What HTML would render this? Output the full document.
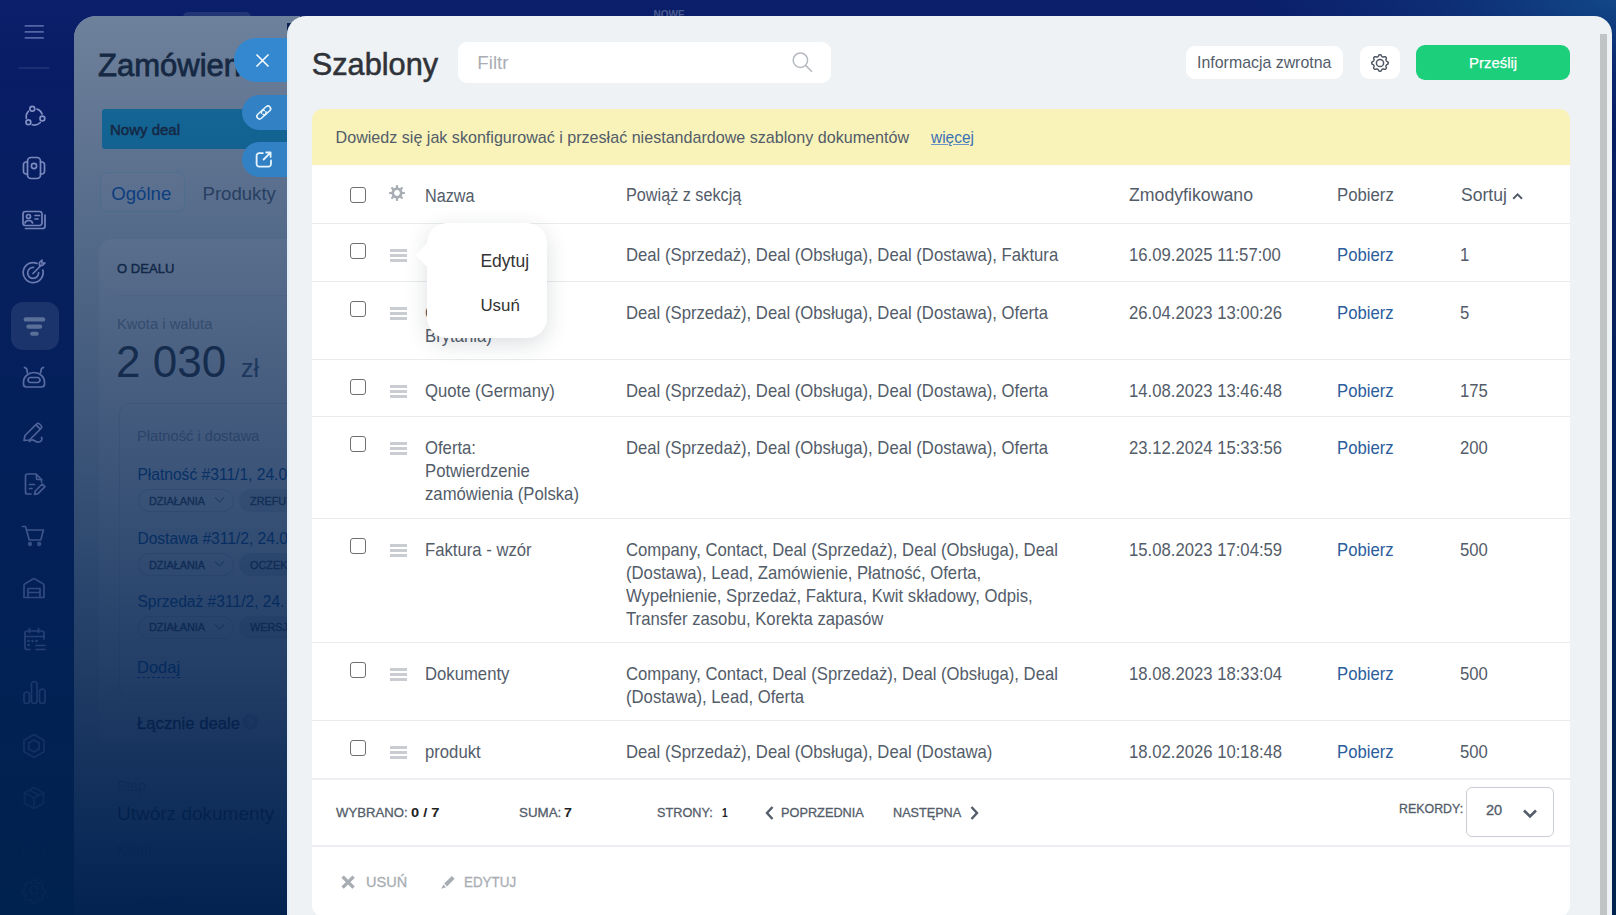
<!DOCTYPE html>
<html><head><meta charset="utf-8">
<style>
*{box-sizing:border-box;margin:0;padding:0}
html,body{width:1616px;height:915px;overflow:hidden}
body{position:relative;font-family:"Liberation Sans",sans-serif;background:linear-gradient(180deg,#0b1f6a 0px,#081c66 80px,#06205e 250px,#03205a 460px,#01224f 860px,#00224f 915px)}
.a{position:absolute;white-space:nowrap}
#slider{position:absolute;left:287px;top:16px;width:1325px;height:899px;background:#eef2f4;border-radius:19px 18px 0 0;overflow:hidden}
.s{position:absolute;white-space:nowrap}
</style></head>
<body>
<div class="a" style="left:1200.00px;top:0.00px;width:416.00px;height:200.00px;background:radial-gradient(ellipse 360px 120px at 416px 0px, rgba(20,85,145,0.75) 0%, rgba(20,85,145,0.25) 50%, rgba(20,85,145,0) 100%)"></div>
<svg class="a" style="left:0;top:0" width="74" height="915" viewBox="0 0 74 915" fill="none" stroke="#8290c4" stroke-width="1.7" stroke-linecap="round" stroke-linejoin="round">
 <defs><linearGradient id="icg" gradientUnits="userSpaceOnUse" x1="0" y1="120" x2="0" y2="900">
   <stop offset="0" stop-color="#8d9bd0" stop-opacity="1"/>
   <stop offset="0.4" stop-color="#8d9bd0" stop-opacity="0.55"/>
   <stop offset="0.73" stop-color="#8d9bd0" stop-opacity="0.18"/>
   <stop offset="1" stop-color="#8d9bd0" stop-opacity="0.04"/>
 </linearGradient></defs>
 <g fill="#5465a6" stroke="none"><rect x="24.5" y="25.1" width="19.5" height="1.7" rx="0.85"/><rect x="24.5" y="31.1" width="19.5" height="1.7" rx="0.85"/><rect x="24.5" y="37.1" width="19.5" height="1.7" rx="0.85"/></g>
 <path d="M19 68h30" stroke="#22357a" stroke-width="1.3"/>
 <g><path d="M36.93 109.0 A8.2 8.2 0 0 1 42.1 114.0"/><path d="M40.3 122.5 A8.2 8.2 0 0 1 32.28 124.72"/><path d="M26.32 118.23 A8.2 8.2 0 0 1 28.4 111.21"/>
 <circle cx="32.3" cy="108.7" r="2.4"/><circle cx="42.4" cy="118.5" r="2.4"/><circle cx="28.4" cy="122.3" r="2.4"/></g>
 <g transform="translate(34,168)" opacity="0.95"><rect x="-6.5" y="-10.5" width="13" height="21" rx="3.5"/><path d="M-6.5 -6 h-1.5 a2.5 2.5 0 0 0 -2.5 2.5 v7 a2.5 2.5 0 0 0 2.5 2.5 h1.5 M6.5 -6 h1.5 a2.5 2.5 0 0 1 2.5 2.5 v7 a2.5 2.5 0 0 1 -2.5 2.5 h-1.5"/><circle cx="0" cy="-2" r="2.6"/></g>
 <g transform="translate(34,220)" opacity="0.9"><rect x="-11" y="-8.5" width="19" height="14" rx="2.5"/><path d="M11 -5 v11 a2.5 2.5 0 0 1 -2.5 2.5 h-17"/><circle cx="-5.5" cy="-3.5" r="2"/><path d="M-9 3 a3.8 3 0 0 1 7.5 0M1 -4.5h4.5M1 -1h3"/></g>
 <g transform="translate(34,273)" opacity="0.82"><path d="M8.8 -3 A10 10 0 1 1 3 -9.6"/><path d="M4.6 -0.5 A5.5 5.5 0 1 1 -0.5 -5.6"/><path d="M-1 0.5 L7.5 -8 M5.5 -10.5 v3 h3 l2.5 -2.5 h-3 v-3z"/></g>
 <g transform="translate(34,378)" opacity="0.68"><path d="M-10.5 4 a10.5 9.5 0 0 1 21 0 v2 a3 3 0 0 1 -3 3 h-15 a3 3 0 0 1 -3 -3z"/><rect x="-6" y="-0.5" width="12" height="5" rx="2.5"/><path d="M-6.5 -5 l-1 -4.5 l-2 -1 M6.5 -5 l1 -4.5 l2 -1"/></g>
 <g transform="translate(34,431)" opacity="0.6"><path d="M-10 9.5 l1 -5 l11.5 -11.5 a2.2 2.2 0 0 1 3 0 l1.5 1.5 a2.2 2.2 0 0 1 0 3 l-11.5 11.5 z M1.8 -6.3 l4.5 4.5"/><path d="M-4.5 10.5 c1.5 -1.5 3 -2 4.5 -1 c1.5 1 3 2 5 1.5 c2.5 -0.5 3.5 -2.5 2.5 -4.5"/></g>
 <g transform="translate(34,484)" opacity="0.52"><path d="M-3 10 h-3.5 a2 2 0 0 1 -2 -2 v-16 a2 2 0 0 1 2 -2 h8.5 l5.5 5.5 v2.5"/><path d="M2.5 -9.5 v4 a1 1 0 0 0 1 1 h4"/><path d="M-4.5 0.5h5M-4.5 4.5h2.5"/><path d="M0.5 10.5 l0.8 -3.5 l7 -7 l2.7 2.7 l-7 7z"/></g>
 <g transform="translate(34,536)" opacity="0.45"><path d="M-11.5 -9.5 h3 l3.8 13.5 h11.5 l2.6 -10 h-17"/><circle cx="-4" cy="8" r="1.3"/><circle cx="5.2" cy="8" r="1.3"/></g>
 <g transform="translate(34,588)" opacity="0.36"><path d="M-10 9.5 v-12 a2 2 0 0 1 1 -1.7 l8 -4.8 a2 2 0 0 1 2 0 l8 4.8 a2 2 0 0 1 1 1.7 v12z"/><path d="M-6 9.5 v-9 h12 v9 M-6 4.5 h12"/></g>
 <g transform="translate(34,640)" opacity="0.28"><path d="M10 -1 v-6 a2 2 0 0 0 -2 -2 h-15 a2 2 0 0 0 -2 2 v14.5 a2 2 0 0 0 2 2 h3"/><path d="M-4.5 -11.5 v4 M4.5 -11.5 v4 M-9 -3.5 h19"/><path d="M-5.5 1h0.1M-1.5 1h0.1M2.5 1h0.1M-5.5 5h0.1" stroke-width="2.4"/><path d="M2 5.5 h9 M2 9.5 h9"/></g>
 <g transform="translate(34,692)" opacity="0.2"><rect x="-10" y="0" width="5.5" height="11.5" rx="2.75"/><rect x="-2.5" y="-10.5" width="5.5" height="22" rx="2.75"/><rect x="5.5" y="-3" width="5.5" height="14.5" rx="2.75"/></g>
 <g transform="translate(34,746)" opacity="0.14"><path d="M0 -11.5 l10 5.75 v11.5 l-10 5.75 l-10 -5.75 v-11.5z"/><path d="M0 -6 l5.2 3 v6 l-5.2 3 l-5.2 -3 v-6z"/></g>
 <g transform="translate(34,798)" opacity="0.09"><path d="M0 -10.5 l9.5 5.2 v10.5 l-9.5 5.3 l-9.5 -5.3 v-10.5z M-9.5 -5.3 l9.5 5.3 l9.5 -5.3 M0 0 v10.5 M-4.5 -8 l9.5 5.3"/></g>
 <g transform="translate(34,850)" opacity="0.025"><circle r="11"/></g>
 <g transform="translate(34,890)" opacity="0.04"><circle r="4"/><path d="M-1.8 -10 h3.6 l0.7 2.6 l2 0.8 l2.3 -1.3 l2.5 2.5 l-1.3 2.3 l0.8 2 l2.6 0.7 v3.6 l-2.6 0.7 l-0.8 2 l1.3 2.3 l-2.5 2.5 l-2.3 -1.3 l-2 0.8 l-0.7 2.6 h-3.6 l-0.7 -2.6 l-2 -0.8 l-2.3 1.3 l-2.5 -2.5 l1.3 -2.3 l-0.8 -2 l-2.6 -0.7 v-3.6 l2.6 -0.7 l0.8 -2 l-1.3 -2.3 l2.5 -2.5 l2.3 1.3 l2 -0.8z"/></g>
</svg>
<div class="a" style="left:11.20px;top:301.80px;width:47.60px;height:48.20px;border-radius:12px;background:rgba(160,176,208,0.14)"></div>
<svg class="a" style="left:0;top:0" width="74" height="400"><g fill="#5b7099"><rect x="23.6" y="317.2" width="21.6" height="4.4" rx="2.2"/><rect x="26.3" y="324.6" width="15.9" height="4.2" rx="2.1"/><rect x="30.1" y="331.8" width="8.6" height="4" rx="2"/></g></svg>
<div class="a" style="left:183.00px;top:11.50px;width:68.00px;height:5.50px;border-radius:7px 7px 0 0;background:#223575"></div>
<div class="a t" style="left:653.50px;top:9.73px;font-size:10px;line-height:10px;color:#4b5c8e;font-weight:bold;">NOWE</div>
<div class="a" style="left:74.00px;top:16.00px;width:226.00px;height:899.00px;border-radius:22px 0 0 0;background:#eef2f4"></div>
<div class="a t" style="left:98.00px;top:50.45px;font-size:31px;line-height:31px;color:#333;font-weight:normal;-webkit-text-stroke:0.8px #333">Zamówienie</div>
<div class="a" style="left:102.00px;top:109.00px;width:198.00px;height:40.00px;border-radius:3px 0 0 3px;background:#2fc6f6"></div>
<div class="a t" style="left:110.00px;top:122.40px;font-size:15px;line-height:15px;color:#333;font-weight:normal;-webkit-text-stroke:0.5px #333">Nowy deal</div>
<div class="a" style="left:99.50px;top:172.30px;width:85.00px;height:39.30px;border-radius:8px;border:1px solid rgba(47,198,246,0.18);background:rgba(255,255,255,0.35)"></div>
<div class="a t" style="left:111.30px;top:184.95px;font-size:18.6px;line-height:18.6px;color:#1f6fcf;font-weight:normal;">Ogólne</div>
<div class="a t" style="left:202.50px;top:184.95px;font-size:18.6px;line-height:18.6px;color:#6a737f;font-weight:normal;">Produkty</div>
<div class="a" style="left:98.80px;top:238.50px;width:221.20px;height:505.50px;border-radius:13px;background:#fff"></div>
<div class="a t" style="left:117.00px;top:262.02px;font-size:13.2px;line-height:13.2px;color:#333;font-weight:normal;-webkit-text-stroke:0.45px #333;transform:scaleX(0.99);transform-origin:0 0">O DEALU</div>
<div class="a" style="left:118.00px;top:295.00px;width:182.00px;height:1.00px;background:#edf0f2"></div>
<div class="a t" style="left:117.00px;top:317.47px;font-size:14.8px;line-height:14.8px;color:#a8adb4;font-weight:normal;">Kwota i waluta</div>
<div class="a t" style="left:116.00px;top:339.65px;font-size:44px;line-height:44px;color:#4a4a4a;font-weight:normal;">2 030</div>
<div class="a t" style="left:241.00px;top:355.73px;font-size:25px;line-height:25px;color:#6a737f;font-weight:normal;">zł</div>
<div class="a" style="left:118.70px;top:403.00px;width:201.30px;height:297.00px;border-radius:12px;box-shadow:inset 0 0 0 1px #e8ebee"></div>
<div class="a t" style="left:137.00px;top:428.75px;font-size:14.7px;line-height:14.7px;color:#a8adb4;font-weight:normal;">Płatność i dostawa</div>
<div class="a t" style="left:137.40px;top:466.79px;font-size:15.6px;line-height:15.6px;color:#2067b0;font-weight:normal;">Płatność #311/1, 24.0</div>
<div class="a" style="left:138.40px;top:488.70px;width:95.60px;height:23.30px;border-radius:12px;box-shadow:inset 0 0 0 1px #dfe3e7"></div>
<div class="a t" style="left:148.80px;top:495.62px;font-size:11.2px;line-height:11.2px;color:#535c69;font-weight:normal;-webkit-text-stroke:0.35px #535c69;transform:scaleX(0.97);transform-origin:0 0">DZIAŁANIA</div>
<svg class="a" style="left:214px;top:496.2px" width="11" height="8"><path d="M1 1.5l4.5 4.5l4.5-4.5" fill="none" stroke="#a8adb4" stroke-width="1.1"/></svg>
<div class="a" style="left:239.40px;top:488.70px;width:90.60px;height:23.30px;border-radius:12px;background:#e3e8ec"></div>
<div class="a t" style="left:249.50px;top:495.62px;font-size:11.2px;line-height:11.2px;color:#535c69;font-weight:normal;-webkit-text-stroke:0.35px #535c69;transform:scaleX(0.97);transform-origin:0 0">ZREFUNDOWANO</div>
<div class="a t" style="left:137.40px;top:530.79px;font-size:15.6px;line-height:15.6px;color:#2067b0;font-weight:normal;">Dostawa #311/2, 24.0</div>
<div class="a" style="left:138.40px;top:552.70px;width:95.60px;height:23.30px;border-radius:12px;box-shadow:inset 0 0 0 1px #dfe3e7"></div>
<div class="a t" style="left:148.80px;top:559.62px;font-size:11.2px;line-height:11.2px;color:#535c69;font-weight:normal;-webkit-text-stroke:0.35px #535c69;transform:scaleX(0.97);transform-origin:0 0">DZIAŁANIA</div>
<svg class="a" style="left:214px;top:560.2px" width="11" height="8"><path d="M1 1.5l4.5 4.5l4.5-4.5" fill="none" stroke="#a8adb4" stroke-width="1.1"/></svg>
<div class="a" style="left:239.40px;top:552.70px;width:90.60px;height:23.30px;border-radius:12px;background:#e3e8ec"></div>
<div class="a t" style="left:249.50px;top:559.62px;font-size:11.2px;line-height:11.2px;color:#535c69;font-weight:normal;-webkit-text-stroke:0.35px #535c69;transform:scaleX(0.97);transform-origin:0 0">OCZEKIWANIE</div>
<div class="a t" style="left:137.40px;top:593.59px;font-size:15.6px;line-height:15.6px;color:#2067b0;font-weight:normal;">Sprzedaż #311/2, 24.</div>
<div class="a" style="left:138.40px;top:615.50px;width:95.60px;height:23.30px;border-radius:12px;box-shadow:inset 0 0 0 1px #dfe3e7"></div>
<div class="a t" style="left:148.80px;top:622.42px;font-size:11.2px;line-height:11.2px;color:#535c69;font-weight:normal;-webkit-text-stroke:0.35px #535c69;transform:scaleX(0.97);transform-origin:0 0">DZIAŁANIA</div>
<svg class="a" style="left:214px;top:623.0px" width="11" height="8"><path d="M1 1.5l4.5 4.5l4.5-4.5" fill="none" stroke="#a8adb4" stroke-width="1.1"/></svg>
<div class="a" style="left:239.40px;top:615.50px;width:90.60px;height:23.30px;border-radius:12px;background:#e3e8ec"></div>
<div class="a t" style="left:249.50px;top:622.42px;font-size:11.2px;line-height:11.2px;color:#535c69;font-weight:normal;-webkit-text-stroke:0.35px #535c69;transform:scaleX(0.97);transform-origin:0 0">WERSJA</div>
<div class="a t" style="left:137.00px;top:659.23px;font-size:16.5px;line-height:16.5px;color:#2067b0;font-weight:normal;border-bottom:1px dashed #2067b0;line-height:16.5px;height:18.5px">Dodaj</div>
<div class="a t" style="left:137.00px;top:716.06px;font-size:16.7px;line-height:16.7px;color:#333;font-weight:normal;-webkit-text-stroke:0.3px #333">Łącznie deale</div>
<div class="a" style="left:242.00px;top:714.00px;width:16.00px;height:16.00px;border-radius:50%;background:#d5dade"></div>
<div class="a t" style="left:246.50px;top:717.89px;font-size:11px;line-height:11px;color:#fff;font-weight:bold;">?</div>
<div class="a t" style="left:117.00px;top:779.35px;font-size:14px;line-height:14px;color:#a8adb4;font-weight:normal;">Etap</div>
<div class="a t" style="left:117.00px;top:804.11px;font-size:19px;line-height:19px;color:#333;font-weight:normal;">Utwórz dokumenty</div>
<div class="a t" style="left:117.00px;top:843.35px;font-size:14px;line-height:14px;color:#a8adb4;font-weight:normal;">Klient</div>
<div class="a t" style="left:137.00px;top:894.35px;font-size:14px;line-height:14px;color:#8aa6c8;font-weight:normal;">Kontakt</div>
<div class="a" style="left:74.00px;top:16.00px;width:226.00px;height:899.00px;border-radius:22px 0 0 0;background:linear-gradient(180deg,rgba(0,32,79,0.538) 0px,rgba(0,32,79,0.99) 899px)"></div>
<div class="a" style="left:234.00px;top:37.50px;width:66.00px;height:44.50px;border-radius:22px 0 0 22px;background:#3388d0"></div>
<svg class="a" style="left:254px;top:52px" width="17" height="17"><path d="M2.5 2.5l12 12M14.5 2.5l-12 12" stroke="#fff" stroke-width="1.5"/></svg>
<div class="a" style="left:242.00px;top:95.00px;width:58.00px;height:35.00px;border-radius:17.5px 0 0 17.5px;background:#3281c4"></div>
<svg class="a" style="left:250px;top:98px" width="30" height="30" viewBox="0 0 30 30" fill="none" stroke="#e6f4ff" stroke-width="1.6" stroke-linecap="round"><g transform="translate(13.75 14.5) rotate(-42)"><path d="M1.8 -1.2 A2.7 2.7 0 0 0 -0.4 -2.7 H-5.6 A2.7 2.7 0 0 0 -5.6 2.7 H-0.4 A2.7 2.7 0 0 0 2.1 1"/><path d="M-1.8 1.2 A2.7 2.7 0 0 0 0.4 2.7 H5.6 A2.7 2.7 0 0 0 5.6 -2.7 H0.4 A2.7 2.7 0 0 0 -2.1 -1"/></g></svg>
<div class="a" style="left:242.00px;top:142.00px;width:58.00px;height:35.00px;border-radius:17.5px 0 0 17.5px;background:#3281c4"></div>
<svg class="a" style="left:250px;top:144px" width="30" height="30" viewBox="0 0 30 30" fill="none" stroke="#e6f4ff" stroke-width="1.8" stroke-linecap="round" stroke-linejoin="round"><path d="M12.8 9.2 h-3.6 a2.6 2.6 0 0 0 -2.6 2.6 v8.2 a2.6 2.6 0 0 0 2.6 2.6 h9.2 a2.6 2.6 0 0 0 2.6 -2.6 v-3.6"/><path d="M13.6 15.5 l6.9 -6.9 M16.2 8.5 h4.4 v4.4"/></svg>
<div class="a" style="left:287.00px;top:23.00px;width:13.00px;height:13.00px;background:#0c2250"></div>
<div id="slider">
<div class="s " style="left:24.80px;top:34.01px;font-size:30.7px;line-height:30.7px;color:#2f3238;font-weight:normal;-webkit-text-stroke:0.55px #2f3238">Szablony</div>
<div class="s" style="left:171.00px;top:26.00px;width:373.00px;height:41.00px;background:#fff;border-radius:9px"></div>
<div class="s " style="left:190.30px;top:38.28px;font-size:18.8px;line-height:18.8px;color:#a9adb3;font-weight:normal;">Filtr</div>
<svg class="s" style="left:503px;top:34px" width="26" height="26" viewBox="0 0 26 26" fill="none" stroke="#b5b9be" stroke-width="1.5"><circle cx="10.4" cy="10.2" r="7.2"/><path d="M15.6 15.4 L22 21.7"/></svg>
<div class="s" style="left:899.00px;top:30.00px;width:157.00px;height:33.00px;background:#fff;border-radius:9px"></div>
<div class="s " style="left:910.10px;top:38.94px;font-size:15.9px;line-height:15.9px;color:#535c69;font-weight:normal;">Informacja zwrotna</div>
<div class="s" style="left:1073.00px;top:30.00px;width:40.00px;height:33.00px;background:#fff;border-radius:9px"></div>
<svg class="s" style="left:1083.1px;top:36.6px" width="20" height="20" viewBox="-10 -10 20 20" fill="none" stroke="#4f5864" stroke-width="1.5" stroke-linejoin="round"><path d="M0.00 -8.25 L0.32 -8.23 L0.64 -8.17 L0.95 -8.03 L1.23 -7.75 L1.45 -7.31 L1.65 -6.86 L1.85 -6.56 L2.07 -6.38 L2.31 -6.25 L2.54 -6.14 L2.79 -6.05 L3.04 -5.97 L3.33 -5.94 L3.69 -6.01 L4.14 -6.19 L4.61 -6.35 L5.01 -6.35 L5.32 -6.23 L5.59 -6.05 L5.83 -5.83 L6.05 -5.59 L6.23 -5.32 L6.35 -5.01 L6.35 -4.61 L6.19 -4.14 L6.01 -3.69 L5.94 -3.33 L5.97 -3.04 L6.05 -2.79 L6.14 -2.54 L6.25 -2.31 L6.38 -2.07 L6.56 -1.85 L6.86 -1.65 L7.31 -1.45 L7.75 -1.23 L8.03 -0.95 L8.17 -0.64 L8.23 -0.32 L8.25 -0.00 L8.23 0.32 L8.17 0.64 L8.03 0.95 L7.75 1.23 L7.31 1.45 L6.86 1.65 L6.56 1.85 L6.38 2.07 L6.25 2.31 L6.14 2.54 L6.05 2.79 L5.97 3.04 L5.94 3.33 L6.01 3.69 L6.19 4.14 L6.35 4.61 L6.35 5.01 L6.23 5.32 L6.05 5.59 L5.83 5.83 L5.59 6.05 L5.32 6.23 L5.01 6.35 L4.61 6.35 L4.14 6.19 L3.69 6.01 L3.33 5.94 L3.04 5.97 L2.79 6.05 L2.54 6.14 L2.31 6.25 L2.07 6.38 L1.85 6.56 L1.65 6.86 L1.45 7.31 L1.23 7.75 L0.95 8.03 L0.64 8.17 L0.32 8.23 L0.00 8.25 L-0.32 8.23 L-0.64 8.17 L-0.95 8.03 L-1.23 7.75 L-1.45 7.31 L-1.65 6.86 L-1.85 6.56 L-2.07 6.38 L-2.31 6.25 L-2.54 6.14 L-2.79 6.05 L-3.04 5.97 L-3.33 5.94 L-3.69 6.01 L-4.14 6.19 L-4.61 6.35 L-5.01 6.35 L-5.32 6.23 L-5.59 6.05 L-5.83 5.83 L-6.05 5.59 L-6.23 5.32 L-6.35 5.01 L-6.35 4.61 L-6.19 4.14 L-6.01 3.69 L-5.94 3.33 L-5.97 3.04 L-6.05 2.79 L-6.14 2.54 L-6.25 2.31 L-6.38 2.07 L-6.56 1.85 L-6.86 1.65 L-7.31 1.45 L-7.75 1.23 L-8.03 0.95 L-8.17 0.64 L-8.23 0.32 L-8.25 0.00 L-8.23 -0.32 L-8.17 -0.64 L-8.03 -0.95 L-7.75 -1.23 L-7.31 -1.45 L-6.86 -1.65 L-6.56 -1.85 L-6.38 -2.07 L-6.25 -2.31 L-6.14 -2.54 L-6.05 -2.79 L-5.97 -3.04 L-5.94 -3.33 L-6.01 -3.69 L-6.19 -4.14 L-6.35 -4.61 L-6.35 -5.01 L-6.23 -5.32 L-6.05 -5.59 L-5.83 -5.83 L-5.59 -6.05 L-5.32 -6.23 L-5.01 -6.35 L-4.61 -6.35 L-4.14 -6.19 L-3.69 -6.01 L-3.33 -5.94 L-3.04 -5.97 L-2.79 -6.05 L-2.54 -6.14 L-2.31 -6.25 L-2.07 -6.38 L-1.85 -6.56 L-1.65 -6.86 L-1.45 -7.31 L-1.23 -7.75 L-0.95 -8.03 L-0.64 -8.17 L-0.32 -8.23Z"/><circle r="3.6"/></svg>
<div class="s" style="left:1129.00px;top:29.00px;width:154.00px;height:35.00px;background:#1bcf7b;border-radius:9px"></div>
<div class="s " style="left:1182.34px;top:38.98px;font-size:15.5px;line-height:15.5px;color:#fff;font-weight:normal;transform:scaleX(0.9627);transform-origin:0 0;-webkit-text-stroke:0.25px #fff">Prześlij</div>
<div class="s" style="left:25.00px;top:93.00px;width:1258.00px;height:56.00px;background:#f9f3ba;border-radius:10px 10px 0 0"></div>
<div class="s " style="left:48.60px;top:113.27px;font-size:16.1px;line-height:16.1px;color:#535c69;font-weight:normal;">Dowiedz się jak skonfigurować i przesłać niestandardowe szablony dokumentów</div>
<div class="s " style="left:643.86px;top:113.27px;font-size:16.1px;line-height:16.1px;color:#3a70b5;font-weight:normal;transform:scaleX(0.9591);transform-origin:0 0;text-decoration:underline;text-underline-offset:1px;text-decoration-color:#6a95c8">więcej</div>
<div class="s" style="left:25.00px;top:149.00px;width:1258.00px;height:752.00px;background:#fff;border-radius:0 0 12px 12px"></div>
<div class="s" style="left:63.00px;top:170.50px;width:16.00px;height:16.00px;border:1.5px solid #6d6f72;border-radius:3px;background:#fff"></div>
<svg class="s" style="left:102px;top:169.4px" width="16" height="16" viewBox="-8 -8 16 16"><path fill="#a9aeb4" fill-rule="evenodd" d="M0.00 -7.90 L0.26 -7.90 L0.52 -7.88 L0.77 -7.86 L1.03 -7.79 L1.11 -6.71 L1.10 -5.54 L1.27 -5.45 L1.45 -5.41 L1.63 -5.36 L1.80 -5.30 L1.97 -5.24 L2.14 -5.17 L2.31 -5.10 L2.48 -5.02 L2.64 -4.94 L2.80 -4.85 L2.96 -4.76 L3.14 -4.69 L3.96 -5.53 L4.78 -6.23 L5.01 -6.11 L5.21 -5.94 L5.40 -5.77 L5.59 -5.59 L5.77 -5.40 L5.94 -5.21 L6.11 -5.01 L6.23 -4.78 L5.53 -3.96 L4.69 -3.14 L4.76 -2.96 L4.85 -2.80 L4.94 -2.64 L5.02 -2.48 L5.10 -2.31 L5.17 -2.14 L5.24 -1.97 L5.30 -1.80 L5.36 -1.63 L5.41 -1.45 L5.45 -1.27 L5.54 -1.10 L6.71 -1.11 L7.79 -1.03 L7.86 -0.77 L7.88 -0.52 L7.90 -0.26 L7.90 -0.00 L7.90 0.26 L7.88 0.52 L7.86 0.77 L7.79 1.03 L6.71 1.11 L5.54 1.10 L5.45 1.27 L5.41 1.45 L5.36 1.63 L5.30 1.80 L5.24 1.97 L5.17 2.14 L5.10 2.31 L5.02 2.48 L4.94 2.64 L4.85 2.80 L4.76 2.96 L4.69 3.14 L5.53 3.96 L6.23 4.78 L6.11 5.01 L5.94 5.21 L5.77 5.40 L5.59 5.59 L5.40 5.77 L5.21 5.94 L5.01 6.11 L4.78 6.23 L3.96 5.53 L3.14 4.69 L2.96 4.76 L2.80 4.85 L2.64 4.94 L2.48 5.02 L2.31 5.10 L2.14 5.17 L1.97 5.24 L1.80 5.30 L1.63 5.36 L1.45 5.41 L1.27 5.45 L1.10 5.54 L1.11 6.71 L1.03 7.79 L0.77 7.86 L0.52 7.88 L0.26 7.90 L0.00 7.90 L-0.26 7.90 L-0.52 7.88 L-0.77 7.86 L-1.03 7.79 L-1.11 6.71 L-1.10 5.54 L-1.27 5.45 L-1.45 5.41 L-1.63 5.36 L-1.80 5.30 L-1.97 5.24 L-2.14 5.17 L-2.31 5.10 L-2.48 5.02 L-2.64 4.94 L-2.80 4.85 L-2.96 4.76 L-3.14 4.69 L-3.96 5.53 L-4.78 6.23 L-5.01 6.11 L-5.21 5.94 L-5.40 5.77 L-5.59 5.59 L-5.77 5.40 L-5.94 5.21 L-6.11 5.01 L-6.23 4.78 L-5.53 3.96 L-4.69 3.14 L-4.76 2.96 L-4.85 2.80 L-4.94 2.64 L-5.02 2.48 L-5.10 2.31 L-5.17 2.14 L-5.24 1.97 L-5.30 1.80 L-5.36 1.63 L-5.41 1.45 L-5.45 1.27 L-5.54 1.10 L-6.71 1.11 L-7.79 1.03 L-7.86 0.77 L-7.88 0.52 L-7.90 0.26 L-7.90 0.00 L-7.90 -0.26 L-7.88 -0.52 L-7.86 -0.77 L-7.79 -1.03 L-6.71 -1.11 L-5.54 -1.10 L-5.45 -1.27 L-5.41 -1.45 L-5.36 -1.63 L-5.30 -1.80 L-5.24 -1.97 L-5.17 -2.14 L-5.10 -2.31 L-5.02 -2.48 L-4.94 -2.64 L-4.85 -2.80 L-4.76 -2.96 L-4.69 -3.14 L-5.53 -3.96 L-6.23 -4.78 L-6.11 -5.01 L-5.94 -5.21 L-5.77 -5.40 L-5.59 -5.59 L-5.40 -5.77 L-5.21 -5.94 L-5.01 -6.11 L-4.78 -6.23 L-3.96 -5.53 L-3.14 -4.69 L-2.96 -4.76 L-2.80 -4.85 L-2.64 -4.94 L-2.48 -5.02 L-2.31 -5.10 L-2.14 -5.17 L-1.97 -5.24 L-1.80 -5.30 L-1.63 -5.36 L-1.45 -5.41 L-1.27 -5.45 L-1.10 -5.54 L-1.11 -6.71 L-1.03 -7.79 L-0.77 -7.86 L-0.52 -7.88 L-0.26 -7.90Z M0 -2.9 A2.9 2.9 0 1 0 0.001 -2.9Z"/></svg>
<div class="s " style="left:137.90px;top:170.76px;font-size:18px;line-height:18px;color:#535c69;font-weight:normal;transform:scaleX(0.8980);transform-origin:0 0;">Nazwa</div>
<div class="s " style="left:339.10px;top:170.16px;font-size:18px;line-height:18px;color:#535c69;font-weight:normal;transform:scaleX(0.9005);transform-origin:0 0;">Powiąż z sekcją</div>
<div class="s " style="left:842.10px;top:170.16px;font-size:18px;line-height:18px;color:#535c69;font-weight:normal;transform:scaleX(0.9838);transform-origin:0 0;">Zmodyfikowano</div>
<div class="s " style="left:1050.37px;top:170.16px;font-size:18px;line-height:18px;color:#535c69;font-weight:normal;transform:scaleX(0.9312);transform-origin:0 0;">Pobierz</div>
<div class="s " style="left:1174.00px;top:170.16px;font-size:18px;line-height:18px;color:#535c69;font-weight:normal;transform:scaleX(0.9756);transform-origin:0 0;">Sortuj</div>
<svg class="s" style="left:1224px;top:175px" width="14" height="10"><path d="M2.2 7.8 L6.6 3.4 L11 7.8" fill="none" stroke="#535c69" stroke-width="2"/></svg>
<div class="s" style="left:25.00px;top:207.00px;width:1258.00px;height:1.00px;background:#e9ecef"></div>
<div class="s" style="left:25.00px;top:265.00px;width:1258.00px;height:1.00px;background:#e9ecef"></div>
<div class="s" style="left:25.00px;top:343.00px;width:1258.00px;height:1.00px;background:#e9ecef"></div>
<div class="s" style="left:25.00px;top:400.00px;width:1258.00px;height:1.00px;background:#e9ecef"></div>
<div class="s" style="left:25.00px;top:502.00px;width:1258.00px;height:1.00px;background:#e9ecef"></div>
<div class="s" style="left:25.00px;top:626.00px;width:1258.00px;height:1.00px;background:#e9ecef"></div>
<div class="s" style="left:25.00px;top:704.00px;width:1258.00px;height:1.00px;background:#e9ecef"></div>
<div class="s" style="left:25.00px;top:762.00px;width:1258.00px;height:2.00px;background:#eceef1"></div>
<div class="s" style="left:25.00px;top:829.00px;width:1258.00px;height:2.00px;background:#eceef1"></div>
<div class="s" style="left:63.00px;top:227.00px;width:16.00px;height:16.00px;border:1.5px solid #6d6f72;border-radius:3px;background:#fff"></div>
<div class="s" style="left:103.00px;top:233.00px;width:17.00px;height:2.60px;background:#c9cdd1"></div>
<div class="s" style="left:103.00px;top:238.10px;width:17.00px;height:2.60px;background:#c9cdd1"></div>
<div class="s" style="left:103.00px;top:243.20px;width:17.00px;height:2.60px;background:#c9cdd1"></div>
<div class="s " style="left:338.56px;top:231.41px;font-size:17.7px;line-height:17.7px;color:#535c69;font-weight:normal;transform:scaleX(0.9435);transform-origin:0 0;">Deal (Sprzedaż), Deal (Obsługa), Deal (Dostawa), Faktura</div>
<div class="s " style="left:841.56px;top:231.41px;font-size:17.7px;line-height:17.7px;color:#535c69;font-weight:normal;transform:scaleX(0.9435);transform-origin:0 0;">16.09.2025 11:57:00</div>
<div class="s " style="left:1050.06px;top:231.41px;font-size:17.7px;line-height:17.7px;color:#2b5c9c;font-weight:normal;transform:scaleX(0.9435);transform-origin:0 0;">Pobierz</div>
<div class="s " style="left:1173.06px;top:231.41px;font-size:17.7px;line-height:17.7px;color:#535c69;font-weight:normal;transform:scaleX(0.9435);transform-origin:0 0;">1</div>
<div class="s" style="left:63.00px;top:285.00px;width:16.00px;height:16.00px;border:1.5px solid #6d6f72;border-radius:3px;background:#fff"></div>
<div class="s" style="left:103.00px;top:291.00px;width:17.00px;height:2.60px;background:#c9cdd1"></div>
<div class="s" style="left:103.00px;top:296.10px;width:17.00px;height:2.60px;background:#c9cdd1"></div>
<div class="s" style="left:103.00px;top:301.20px;width:17.00px;height:2.60px;background:#c9cdd1"></div>
<div class="s " style="left:138.06px;top:289.41px;font-size:17.7px;line-height:17.7px;color:#535c69;font-weight:normal;transform:scaleX(0.9435);transform-origin:0 0;">Oferta (Wielka</div>
<div class="s " style="left:138.06px;top:312.41px;font-size:17.7px;line-height:17.7px;color:#535c69;font-weight:normal;transform:scaleX(0.9435);transform-origin:0 0;">Brytania)</div>
<div class="s " style="left:338.56px;top:289.41px;font-size:17.7px;line-height:17.7px;color:#535c69;font-weight:normal;transform:scaleX(0.9435);transform-origin:0 0;">Deal (Sprzedaż), Deal (Obsługa), Deal (Dostawa), Oferta</div>
<div class="s " style="left:841.56px;top:289.41px;font-size:17.7px;line-height:17.7px;color:#535c69;font-weight:normal;transform:scaleX(0.9435);transform-origin:0 0;">26.04.2023 13:00:26</div>
<div class="s " style="left:1050.06px;top:289.41px;font-size:17.7px;line-height:17.7px;color:#2b5c9c;font-weight:normal;transform:scaleX(0.9435);transform-origin:0 0;">Pobierz</div>
<div class="s " style="left:1173.06px;top:289.41px;font-size:17.7px;line-height:17.7px;color:#535c69;font-weight:normal;transform:scaleX(0.9435);transform-origin:0 0;">5</div>
<div class="s" style="left:63.00px;top:363.00px;width:16.00px;height:16.00px;border:1.5px solid #6d6f72;border-radius:3px;background:#fff"></div>
<div class="s" style="left:103.00px;top:369.00px;width:17.00px;height:2.60px;background:#c9cdd1"></div>
<div class="s" style="left:103.00px;top:374.10px;width:17.00px;height:2.60px;background:#c9cdd1"></div>
<div class="s" style="left:103.00px;top:379.20px;width:17.00px;height:2.60px;background:#c9cdd1"></div>
<div class="s " style="left:138.06px;top:367.41px;font-size:17.7px;line-height:17.7px;color:#535c69;font-weight:normal;transform:scaleX(0.9435);transform-origin:0 0;">Quote (Germany)</div>
<div class="s " style="left:338.56px;top:367.41px;font-size:17.7px;line-height:17.7px;color:#535c69;font-weight:normal;transform:scaleX(0.9435);transform-origin:0 0;">Deal (Sprzedaż), Deal (Obsługa), Deal (Dostawa), Oferta</div>
<div class="s " style="left:841.56px;top:367.41px;font-size:17.7px;line-height:17.7px;color:#535c69;font-weight:normal;transform:scaleX(0.9435);transform-origin:0 0;">14.08.2023 13:46:48</div>
<div class="s " style="left:1050.06px;top:367.41px;font-size:17.7px;line-height:17.7px;color:#2b5c9c;font-weight:normal;transform:scaleX(0.9435);transform-origin:0 0;">Pobierz</div>
<div class="s " style="left:1173.06px;top:367.41px;font-size:17.7px;line-height:17.7px;color:#535c69;font-weight:normal;transform:scaleX(0.9435);transform-origin:0 0;">175</div>
<div class="s" style="left:63.00px;top:420.00px;width:16.00px;height:16.00px;border:1.5px solid #6d6f72;border-radius:3px;background:#fff"></div>
<div class="s" style="left:103.00px;top:426.00px;width:17.00px;height:2.60px;background:#c9cdd1"></div>
<div class="s" style="left:103.00px;top:431.10px;width:17.00px;height:2.60px;background:#c9cdd1"></div>
<div class="s" style="left:103.00px;top:436.20px;width:17.00px;height:2.60px;background:#c9cdd1"></div>
<div class="s " style="left:138.06px;top:424.41px;font-size:17.7px;line-height:17.7px;color:#535c69;font-weight:normal;transform:scaleX(0.9435);transform-origin:0 0;">Oferta:</div>
<div class="s " style="left:138.06px;top:447.41px;font-size:17.7px;line-height:17.7px;color:#535c69;font-weight:normal;transform:scaleX(0.9435);transform-origin:0 0;">Potwierdzenie</div>
<div class="s " style="left:138.06px;top:470.41px;font-size:17.7px;line-height:17.7px;color:#535c69;font-weight:normal;transform:scaleX(0.9435);transform-origin:0 0;">zamówienia (Polska)</div>
<div class="s " style="left:338.56px;top:424.41px;font-size:17.7px;line-height:17.7px;color:#535c69;font-weight:normal;transform:scaleX(0.9435);transform-origin:0 0;">Deal (Sprzedaż), Deal (Obsługa), Deal (Dostawa), Oferta</div>
<div class="s " style="left:841.56px;top:424.41px;font-size:17.7px;line-height:17.7px;color:#535c69;font-weight:normal;transform:scaleX(0.9435);transform-origin:0 0;">23.12.2024 15:33:56</div>
<div class="s " style="left:1050.06px;top:424.41px;font-size:17.7px;line-height:17.7px;color:#2b5c9c;font-weight:normal;transform:scaleX(0.9435);transform-origin:0 0;">Pobierz</div>
<div class="s " style="left:1173.06px;top:424.41px;font-size:17.7px;line-height:17.7px;color:#535c69;font-weight:normal;transform:scaleX(0.9435);transform-origin:0 0;">200</div>
<div class="s" style="left:63.00px;top:522.00px;width:16.00px;height:16.00px;border:1.5px solid #6d6f72;border-radius:3px;background:#fff"></div>
<div class="s" style="left:103.00px;top:528.00px;width:17.00px;height:2.60px;background:#c9cdd1"></div>
<div class="s" style="left:103.00px;top:533.10px;width:17.00px;height:2.60px;background:#c9cdd1"></div>
<div class="s" style="left:103.00px;top:538.20px;width:17.00px;height:2.60px;background:#c9cdd1"></div>
<div class="s " style="left:138.06px;top:526.41px;font-size:17.7px;line-height:17.7px;color:#535c69;font-weight:normal;transform:scaleX(0.9435);transform-origin:0 0;">Faktura - wzór</div>
<div class="s " style="left:338.56px;top:526.41px;font-size:17.7px;line-height:17.7px;color:#535c69;font-weight:normal;transform:scaleX(0.9435);transform-origin:0 0;">Company, Contact, Deal (Sprzedaż), Deal (Obsługa), Deal</div>
<div class="s " style="left:338.56px;top:549.41px;font-size:17.7px;line-height:17.7px;color:#535c69;font-weight:normal;transform:scaleX(0.9435);transform-origin:0 0;">(Dostawa), Lead, Zamówienie, Płatność, Oferta,</div>
<div class="s " style="left:338.56px;top:572.41px;font-size:17.7px;line-height:17.7px;color:#535c69;font-weight:normal;transform:scaleX(0.9435);transform-origin:0 0;">Wypełnienie, Sprzedaż, Faktura, Kwit składowy, Odpis,</div>
<div class="s " style="left:338.56px;top:595.41px;font-size:17.7px;line-height:17.7px;color:#535c69;font-weight:normal;transform:scaleX(0.9435);transform-origin:0 0;">Transfer zasobu, Korekta zapasów</div>
<div class="s " style="left:841.56px;top:526.41px;font-size:17.7px;line-height:17.7px;color:#535c69;font-weight:normal;transform:scaleX(0.9435);transform-origin:0 0;">15.08.2023 17:04:59</div>
<div class="s " style="left:1050.06px;top:526.41px;font-size:17.7px;line-height:17.7px;color:#2b5c9c;font-weight:normal;transform:scaleX(0.9435);transform-origin:0 0;">Pobierz</div>
<div class="s " style="left:1173.06px;top:526.41px;font-size:17.7px;line-height:17.7px;color:#535c69;font-weight:normal;transform:scaleX(0.9435);transform-origin:0 0;">500</div>
<div class="s" style="left:63.00px;top:646.00px;width:16.00px;height:16.00px;border:1.5px solid #6d6f72;border-radius:3px;background:#fff"></div>
<div class="s" style="left:103.00px;top:652.00px;width:17.00px;height:2.60px;background:#c9cdd1"></div>
<div class="s" style="left:103.00px;top:657.10px;width:17.00px;height:2.60px;background:#c9cdd1"></div>
<div class="s" style="left:103.00px;top:662.20px;width:17.00px;height:2.60px;background:#c9cdd1"></div>
<div class="s " style="left:138.06px;top:650.41px;font-size:17.7px;line-height:17.7px;color:#535c69;font-weight:normal;transform:scaleX(0.9435);transform-origin:0 0;">Dokumenty</div>
<div class="s " style="left:338.56px;top:650.41px;font-size:17.7px;line-height:17.7px;color:#535c69;font-weight:normal;transform:scaleX(0.9435);transform-origin:0 0;">Company, Contact, Deal (Sprzedaż), Deal (Obsługa), Deal</div>
<div class="s " style="left:338.56px;top:673.41px;font-size:17.7px;line-height:17.7px;color:#535c69;font-weight:normal;transform:scaleX(0.9435);transform-origin:0 0;">(Dostawa), Lead, Oferta</div>
<div class="s " style="left:841.56px;top:650.41px;font-size:17.7px;line-height:17.7px;color:#535c69;font-weight:normal;transform:scaleX(0.9435);transform-origin:0 0;">18.08.2023 18:33:04</div>
<div class="s " style="left:1050.06px;top:650.41px;font-size:17.7px;line-height:17.7px;color:#2b5c9c;font-weight:normal;transform:scaleX(0.9435);transform-origin:0 0;">Pobierz</div>
<div class="s " style="left:1173.06px;top:650.41px;font-size:17.7px;line-height:17.7px;color:#535c69;font-weight:normal;transform:scaleX(0.9435);transform-origin:0 0;">500</div>
<div class="s" style="left:63.00px;top:724.00px;width:16.00px;height:16.00px;border:1.5px solid #6d6f72;border-radius:3px;background:#fff"></div>
<div class="s" style="left:103.00px;top:730.00px;width:17.00px;height:2.60px;background:#c9cdd1"></div>
<div class="s" style="left:103.00px;top:735.10px;width:17.00px;height:2.60px;background:#c9cdd1"></div>
<div class="s" style="left:103.00px;top:740.20px;width:17.00px;height:2.60px;background:#c9cdd1"></div>
<div class="s " style="left:138.06px;top:728.41px;font-size:17.7px;line-height:17.7px;color:#535c69;font-weight:normal;transform:scaleX(0.9435);transform-origin:0 0;">produkt</div>
<div class="s " style="left:338.56px;top:728.41px;font-size:17.7px;line-height:17.7px;color:#535c69;font-weight:normal;transform:scaleX(0.9435);transform-origin:0 0;">Deal (Sprzedaż), Deal (Obsługa), Deal (Dostawa)</div>
<div class="s " style="left:841.56px;top:728.41px;font-size:17.7px;line-height:17.7px;color:#535c69;font-weight:normal;transform:scaleX(0.9435);transform-origin:0 0;">18.02.2026 10:18:48</div>
<div class="s " style="left:1050.06px;top:728.41px;font-size:17.7px;line-height:17.7px;color:#2b5c9c;font-weight:normal;transform:scaleX(0.9435);transform-origin:0 0;">Pobierz</div>
<div class="s " style="left:1173.06px;top:728.41px;font-size:17.7px;line-height:17.7px;color:#535c69;font-weight:normal;transform:scaleX(0.9435);transform-origin:0 0;">500</div>
<div class="s" style="left:139.7px;top:207px;width:120px;height:115px;background:#fff;border-radius:20px;box-shadow:0 6px 22px rgba(40,50,60,0.16)"></div>
<svg class="s" style="left:127px;top:224px" width="16" height="30"><path d="M14 2 L1.8 15 L14 28 Z" fill="#fff"/></svg>
<div class="s " style="left:193.40px;top:236.78px;font-size:17.5px;line-height:17.5px;color:#333;font-weight:normal;">Edytuj</div>
<div class="s " style="left:193.40px;top:281.89px;font-size:16.9px;line-height:16.9px;color:#333;font-weight:normal;">Usuń</div>
<div class="s " style="left:49.10px;top:790.08px;font-size:13.6px;line-height:13.6px;color:#535c69;font-weight:normal;transform:scaleX(0.9667);transform-origin:0 0;-webkit-text-stroke:0.3px #535c69">WYBRANO:</div>
<div class="s " style="left:124.30px;top:790.08px;font-size:13.6px;line-height:13.6px;color:#222;font-weight:bold;transform:scaleX(1.0738);transform-origin:0 0;">0 / 7</div>
<div class="s " style="left:231.60px;top:790.08px;font-size:13.6px;line-height:13.6px;color:#535c69;font-weight:normal;transform:scaleX(0.9817);transform-origin:0 0;-webkit-text-stroke:0.3px #535c69">SUMA:</div>
<div class="s " style="left:277.10px;top:790.08px;font-size:13.6px;line-height:13.6px;color:#222;font-weight:bold;transform:scaleX(1.0429);transform-origin:0 0;">7</div>
<div class="s " style="left:370.40px;top:790.08px;font-size:13.6px;line-height:13.6px;color:#535c69;font-weight:normal;transform:scaleX(0.9339);transform-origin:0 0;-webkit-text-stroke:0.3px #535c69">STRONY:</div>
<div class="s " style="left:435.00px;top:790.08px;font-size:13.6px;line-height:13.6px;color:#222;font-weight:bold;transform:scaleX(0.7500);transform-origin:0 0;">1</div>
<svg class="s" style="left:477px;top:789px" width="11" height="16"><path d="M8.5 2 L3 8 L8.5 14" fill="none" stroke="#535c69" stroke-width="2.4"/></svg>
<div class="s " style="left:493.76px;top:790.08px;font-size:13.6px;line-height:13.6px;color:#535c69;font-weight:normal;transform:scaleX(0.9377);transform-origin:0 0;-webkit-text-stroke:0.3px #535c69">POPRZEDNIA</div>
<div class="s " style="left:606.47px;top:790.08px;font-size:13.6px;line-height:13.6px;color:#535c69;font-weight:normal;transform:scaleX(0.9303);transform-origin:0 0;-webkit-text-stroke:0.3px #535c69">NASTĘPNA</div>
<svg class="s" style="left:682px;top:789px" width="11" height="16"><path d="M2.5 2 L8 8 L2.5 14" fill="none" stroke="#535c69" stroke-width="2.4"/></svg>
<div class="s " style="left:1111.87px;top:786.05px;font-size:13.4px;line-height:13.4px;color:#535c69;font-weight:normal;transform:scaleX(0.9262);transform-origin:0 0;-webkit-text-stroke:0.3px #535c69">REKORDY:</div>
<div class="s" style="left:1179.40px;top:771.20px;width:87.20px;height:49.50px;border:1px solid #c9ced4;border-radius:6px;background:#fff"></div>
<div class="s " style="left:1199.20px;top:787.24px;font-size:14.6px;line-height:14.6px;color:#535c69;font-weight:normal;transform:scaleX(0.9990);transform-origin:0 0;-webkit-text-stroke:0.3px #535c69">20</div>
<svg class="s" style="left:1234px;top:790px" width="18" height="14"><path d="M3 4.5 L9 10.5 L15 4.5" fill="none" stroke="#535c69" stroke-width="2.6"/></svg>
<svg class="s" style="left:53px;top:857.5px" width="16" height="16"><path d="M2.6 2.6 L13.6 13.6 M13.6 2.6 L2.6 13.6" stroke="#a8adb3" stroke-width="3.4"/></svg>
<div class="s " style="left:79.29px;top:859.01px;font-size:14.4px;line-height:14.4px;color:#a8adb3;font-weight:normal;transform:scaleX(1.0080);transform-origin:0 0;-webkit-text-stroke:0.3px #a8adb3">USUŃ</div>
<svg class="s" style="left:153px;top:857px" width="16" height="17"><path d="M4.2 10.6 L11.8 3 L14.6 5.8 L7 13.4 Z" fill="#a8adb3"/><path d="M3.4 11.6 L6 14.2 L1.2 15.8 Z" fill="#a8adb3"/></svg>
<div class="s " style="left:177.07px;top:859.01px;font-size:14.4px;line-height:14.4px;color:#a8adb3;font-weight:normal;transform:scaleX(0.9311);transform-origin:0 0;-webkit-text-stroke:0.3px #a8adb3">EDYTUJ</div>
<div class="s" style="left:1313.00px;top:18.00px;width:7.00px;height:881.00px;background:#c1c4c5"></div>
<div class="s" style="left:0.00px;top:0.00px;width:1.50px;height:899.00px;background:#dcebfa;opacity:0.6"></div>
</div>
</body></html>
